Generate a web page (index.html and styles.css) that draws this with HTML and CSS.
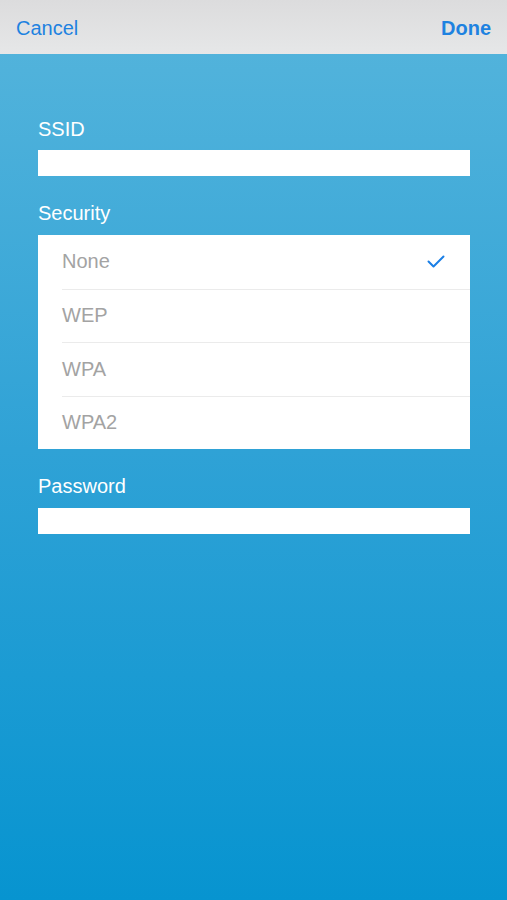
FILE: index.html
```html
<!DOCTYPE html>
<html lang="en">
<head>
  <meta charset="UTF-8">
  <meta name="viewport" content="width=device-width, initial-scale=1.0">
  <title>Wi-Fi Network</title>
  <link rel="stylesheet" href="styles.css">
</head>
<body>

  <div class="navbar">
    <a href="#" class="cancel">Cancel</a>
    <a href="#" class="done">Done</a>
  </div>

  <div class="form">
    <div class="label first">SSID</div>
    <div class="field"></div>

    <div class="label">Security</div>
    <div class="options">
      <div class="option">
        <span>None</span>
        <svg class="check" width="18" height="13" viewBox="0 0 18 13">
          <path d="M1.5 6.5 L6.5 11.5 L16.5 1.5" fill="none" stroke="#1a7fe6" stroke-width="2" stroke-linecap="round" stroke-linejoin="round"/>
        </svg>
      </div>
      <div class="option"><span>WEP</span></div>
      <div class="option"><span>WPA</span></div>
      <div class="option"><span>WPA2</span></div>
    </div>

    <div class="label">Password</div>
    <div class="field"></div>
  </div>

</body>
</html>
```

FILE: styles.css
```css
* {
  margin: 0;
  padding: 0;
  box-sizing: border-box;
}

html, body {
  height: 100%;
}

body {
  font-family: 'Liberation Sans', Arial, sans-serif;
  background: linear-gradient(180deg, #56b5dc 0%, #2fa2d6 50%, #0794d0 100%);
  min-height: 900px;
}

.navbar {
  height: 54px;
  background: linear-gradient(180deg, #dcdcdd, #e6e7e8);
  display: flex;
  justify-content: space-between;
  align-items: center;
  padding: 2px 16px 0 16px;
}

.navbar a {
  color: #1e82e0;
  text-decoration: none;
  font-size: 20px;
}

.navbar .done {
  font-weight: bold;
}

.form {
  padding: 0 37px 0 38px;
}

.label {
  color: #ffffff;
  font-size: 20px;
  line-height: 22px;
  margin-top: 26px;
  margin-bottom: 11px;
}

.label.first {
  margin-top: 64px;
  margin-bottom: 10px;
}

.field {
  height: 26px;
  background: #ffffff;
}

.options {
  background: #ffffff;
}

.option {
  height: 53.5px;
  margin-left: 24px;
  padding-right: 25px;
  display: flex;
  align-items: center;
  justify-content: space-between;
  color: #a3a3a3;
  font-size: 20px;
  border-top: 1px solid #ebebeb;
}

.option:first-child {
  border-top: none;
}

.check {
  display: block;
}
```
